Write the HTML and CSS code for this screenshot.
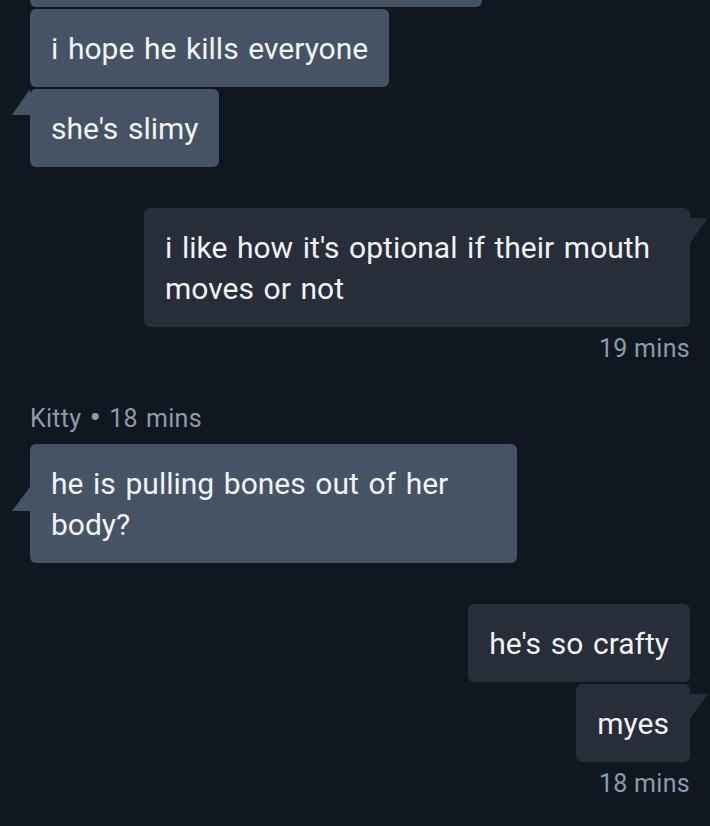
FILE: index.html
```html
<!DOCTYPE html>
<html>
<head>
<meta charset="utf-8">
<link rel="stylesheet" href="styles.css">
</head>
<body>
<div class="chat">
  <div class="group in">
    <div class="bubble in-b first"></div>
    <div class="bubble in-b">i hope he kills everyone</div>
    <div class="bubble in-b tail tail-in-slimy">she's slimy</div>
  </div>

  <div class="group out">
    <div class="bubble out-b w546 tail tail-out">i like how it's optional if their mouth moves or not</div>
    <div class="stamp">19 mins</div>
  </div>

  <div class="group in">
    <div class="meta">Kitty <span class="dot">•</span> 18 mins</div>
    <div class="bubble in-b w487 tail tail-in-kitty">he is pulling bones out of her body?</div>
  </div>

  <div class="group out">
    <div class="bubble out-b">he's so crafty</div>
    <div class="bubble out-b tail tail-out">myes</div>
    <div class="stamp">18 mins</div>
  </div>
</div>
</body>
</html>
```

FILE: styles.css
```css
html, body {
  margin: 0;
  padding: 0;
  background: #111720;
  height: 100%;
  overflow: hidden;
}
.chat {
  display: flex;
  flex-direction: column;
  gap: 41px;
  padding: 0 20px 0 30px;
  margin-top: -71px;
  font-family: Roboto, "Noto Sans", sans-serif;
}
.group {
  display: flex;
  flex-direction: column;
  gap: 2px;
}
.group.in { align-items: flex-start; }
.group.out { align-items: flex-end; }
.bubble {
  position: relative;
  box-sizing: border-box;
  font-size: 30px;
  word-spacing: 2.2px;
  line-height: 41px;
  padding: 19px 21px 18px;
  border-radius: 6px;
  color: #f1f3f5;
}
.in-b { background: #455364; }
.out-b { background: #272d39; }
.first { width: 452px; height: 78px; }
.w546 { width: 546px; }
.w487 { width: 487px; }
.tail::before {
  content: "";
  position: absolute;
  width: 18px;
  height: 26px;
  background: inherit;
}
.tail-in-slimy::before,
.tail-in-kitty::before {
  left: -18px;
  clip-path: polygon(100% 0, 100% 100%, 0 100%);
}
.tail-in-slimy::before { top: 0; }
.tail-in-kitty::before { top: 43px; height: 24px; }
.tail-out::before {
  right: -18px;
  top: 10px;
  height: 25px;
  clip-path: polygon(0 0, 100% 0, 0 100%);
}
.stamp {
  font-size: 25px;
  letter-spacing: 0.3px;
  line-height: 32px;
  color: #8b9baa;
  margin-top: 4px;
}
.meta {
  font-size: 25px;
  letter-spacing: 0.3px;
  word-spacing: 1.5px;
  line-height: 32px;
  color: #8b9baa;
  margin-top: -3px;
  margin-bottom: 7px;
}
.dot {
  font-size: 34px;
  line-height: 0;
  vertical-align: -2px;
}
```
